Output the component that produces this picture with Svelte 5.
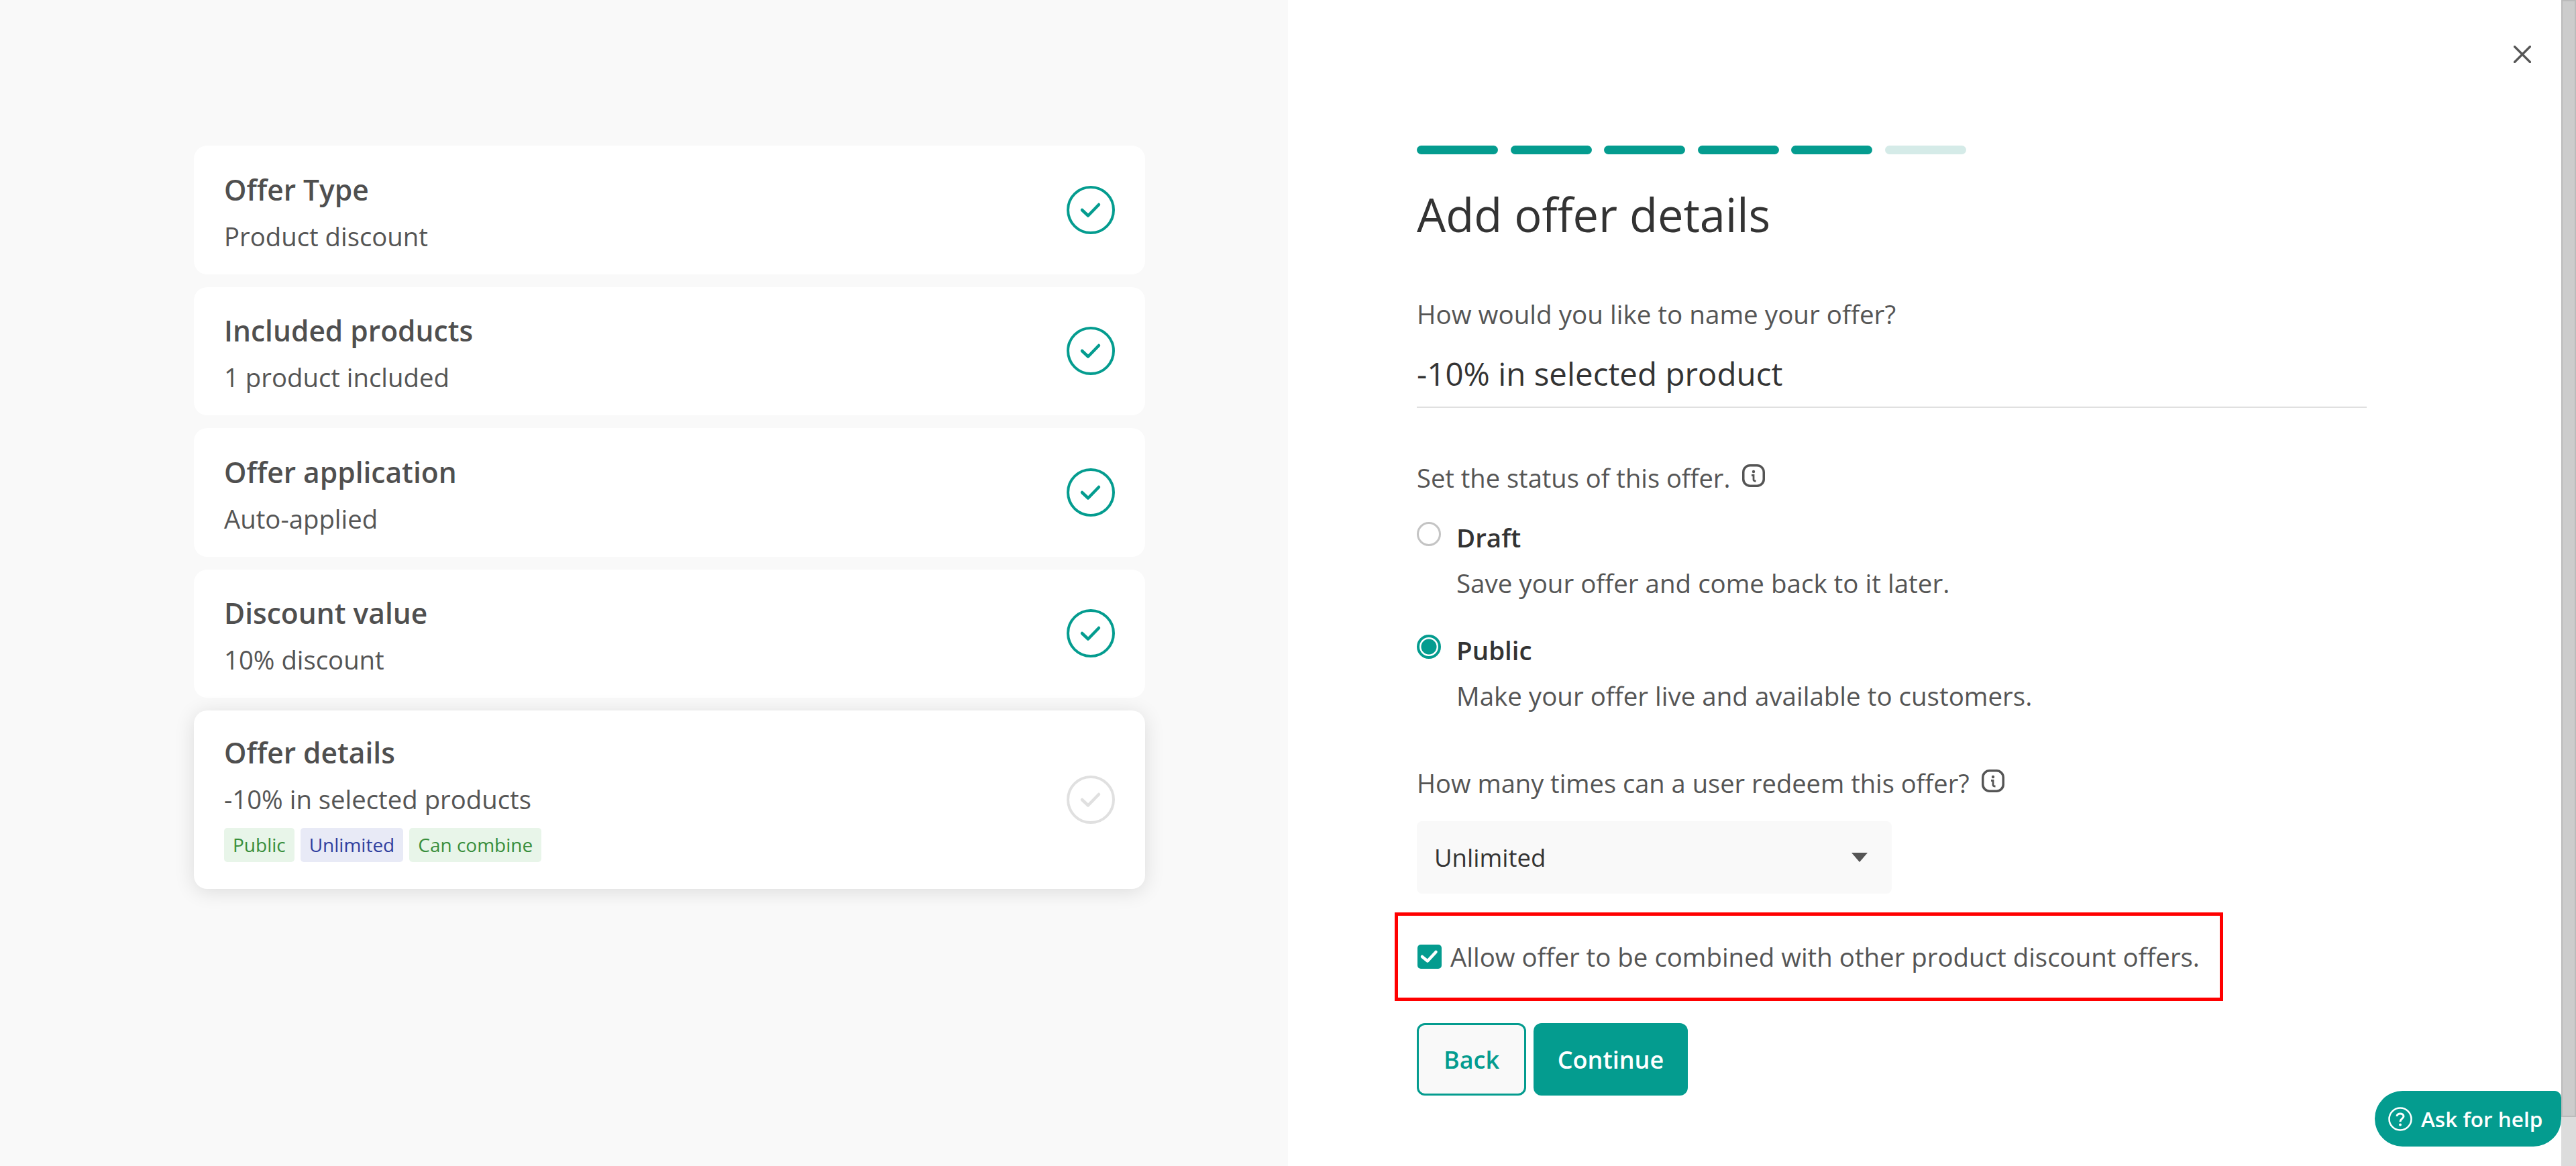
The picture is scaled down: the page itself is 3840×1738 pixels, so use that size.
<script>
  const steps = [
    { title: 'Offer Type', sub: 'Product discount' },
    { title: 'Included products', sub: '1 product included' },
    { title: 'Offer application', sub: 'Auto-applied' },
    { title: 'Discount value', sub: '10% discount' }
  ];
  const tags = [
    { label: 'Public', kind: 'green' },
    { label: 'Unlimited', kind: 'blue' },
    { label: 'Can combine', kind: 'green' }
  ];
  const bars = [true, true, true, true, true, false];
</script>

{#snippet check(muted)}
  <svg class="check" class:muted viewBox="0 0 72 72" fill="none">
    <circle cx="36" cy="36" r="34" stroke-width="4" />
    <path d="M23 36 L32 44.500 L48 28" stroke-width="4.500" stroke-linecap="round" stroke-linejoin="round" />
  </svg>
{/snippet}

{#snippet info()}
  <svg class="info" viewBox="0 0 34 34" fill="none">
    <rect x="1.750" y="1.750" width="30.500" height="30.500" rx="10" stroke="#555" stroke-width="3.500" />
    <circle cx="17" cy="11" r="2.200" fill="#555" />
    <path d="M14 16.500 H17 V23 Q17 25 20.500 25" stroke="#555" stroke-width="2.800" />
  </svg>
{/snippet}

<div class="page">
  <aside class="summary">
    {#each steps as step}
      <div class="card">
        <div class="card-body">
          <div class="card-title">{step.title}</div>
          <div class="card-sub">{step.sub}</div>
        </div>
        {@render check(false)}
      </div>
    {/each}
    <div class="card current">
      <div class="card-body">
        <div class="card-title">Offer details</div>
        <div class="card-sub">-10% in selected products</div>
        <div class="tags">
          {#each tags as tag}
            <span class="tag {tag.kind}">{tag.label}</span>
          {/each}
        </div>
      </div>
      {@render check(true)}
    </div>
  </aside>

  <main class="form">
    <div class="bars">
      {#each bars as on}
        <span class="bar" class:on></span>
      {/each}
    </div>
    <h1>Add offer details</h1>

    <div class="label first">How would you like to name your offer?</div>
    <div class="name-input">-10% in selected product</div>

    <div class="label status">Set the status of this offer. {@render info()}</div>
    <div class="radio draft">
      <span class="dot"></span>
      <div>
        <div class="radio-title">Draft</div>
        <div class="radio-text">Save your offer and come back to it later.</div>
      </div>
    </div>
    <div class="radio public">
      <span class="dot on"></span>
      <div>
        <div class="radio-title">Public</div>
        <div class="radio-text">Make your offer live and available to customers.</div>
      </div>
    </div>

    <div class="label redeem">How many times can a user redeem this offer? {@render info()}</div>
    <div class="select">
      <span>Unlimited</span>
      <span class="arrow"></span>
    </div>

    <div class="highlight">
      <span class="box">
        <svg viewBox="0 0 36 36" fill="none">
          <path d="M7 18 L15 24.500 L27.500 11" stroke="#fff" stroke-width="4.500" stroke-linecap="round" stroke-linejoin="round" />
        </svg>
      </span>
      <span>Allow offer to be combined with other product discount offers.</span>
    </div>

    <div class="actions">
      <button class="btn back">Back</button>
      <button class="btn next">Continue</button>
    </div>

    <button class="close" aria-label="Close">
      <svg viewBox="0 0 26 26" fill="none">
        <path d="M1.500 1.500 L24.500 24.500 M24.500 1.500 L1.500 24.500" stroke="#555" stroke-width="3.200" stroke-linecap="round" />
      </svg>
    </button>
    <button class="help">
      <svg viewBox="0 0 36 36" fill="none">
        <circle cx="18" cy="18" r="16.500" stroke="#fff" stroke-width="2.500" />
        <path d="M13 14 C13 8.500 23 8.500 23 14 C23 17.500 18 17.500 18 22" stroke="#fff" stroke-width="3" />
        <circle cx="18" cy="26.500" r="2" fill="#fff" />
      </svg>
      Ask for help
    </button>
  </main>

  <div class="scrollbar"><div class="thumb"></div></div>
</div>

<style>
  :global(body) {
    margin: 0;
    background: #fff;
  }

  .page {
    display: flex;
    width: 3840px;
    height: 1738px;
    overflow: hidden;
    font-family: "Open Sans", "Noto Sans", sans-serif;
    color: #555;
  }

  .summary {
    box-sizing: border-box;
    width: 1920px;
    padding: 217px 213px 0 289px;
    background: #f9f9f9;
    display: flex;
    flex-direction: column;
    gap: 19px;
  }

  .card {
    box-sizing: border-box;
    height: 191.5px;
    padding: 0 45px;
    background: #fff;
    border-radius: 20px;
    display: flex;
    align-items: center;
    justify-content: space-between;
  }

  .card.current {
    height: 266px;
    box-shadow: 0 4px 30px rgba(0, 0, 0, 0.12);
  }

  .card-body {
    padding-top: 7px;
  }

  .current .card-body {
    padding: 0 0 6px;
  }

  .card-title {
    font-size: 42.5px;
    line-height: 56px;
    font-weight: 600;
    color: #4f4f4f;
  }

  .card-sub {
    margin-top: 15px;
    font-size: 38.3px;
    line-height: 52px;
  }

  .tags {
    display: flex;
    gap: 9px;
    margin-top: 17px;
  }

  .tag {
    height: 51px;
    padding: 0 13px;
    border-radius: 5px;
    font-size: 28px;
    line-height: 51px;
  }

  .tag.green {
    background: #e8f5e9;
    color: #388e3c;
  }

  .tag.blue {
    background: #e8eaf6;
    color: #303f9f;
  }

  .check {
    width: 72px;
    height: 72px;
    flex: none;
    stroke: #049c8f;
  }

  .check.muted {
    stroke: #e0e0e0;
  }

  .form {
    position: relative;
    flex: 1;
    box-sizing: border-box;
    padding: 217px 290px 0 192px;
  }

  .bars {
    display: flex;
    gap: 18.6px;
  }

  .bar {
    width: 121px;
    height: 13px;
    border-radius: 7px;
    background: #d5ebe8;
  }

  .bar.on {
    background: #049c8f;
  }

  h1 {
    margin: 43px 0 0;
    font-size: 68.6px;
    line-height: 94px;
    font-weight: 400;
    color: #333;
  }

  .label {
    font-size: 38.1px;
    line-height: 52px;
    display: flex;
    align-items: center;
    gap: 18px;
  }

  .label.first {
    margin-top: 75px;
    font-size: 38.6px;
  }

  .name-input {
    margin-top: 32px;
    height: 80px;
    font-size: 47.5px;
    line-height: 62px;
    color: #333;
    border-bottom: 2px solid #e0e0e0;
  }

  .label.status {
    margin-top: 78px;
  }

  .info {
    width: 34px;
    height: 34px;
    flex: none;
    margin-top: -6px;
  }

  .radio {
    display: flex;
    gap: 23px;
  }

  .radio.draft {
    margin-top: 37px;
  }

  .radio.public {
    margin-top: 48px;
  }

  .dot {
    box-sizing: border-box;
    width: 36px;
    height: 36px;
    margin-top: 3px;
    border: 3px solid #c4c4c4;
    border-radius: 50%;
    flex: none;
  }

  .dot.on {
    border: 4px solid #049c8f;
    background: radial-gradient(circle, #049c8f 0 11px, #fff 12px);
  }

  .radio-title {
    font-size: 38.5px;
    line-height: 52px;
    font-weight: 600;
    color: #333;
  }

  .radio-text {
    margin-top: 16px;
    font-size: 38.5px;
    line-height: 52px;
  }

  .label.redeem {
    margin-top: 78px;
  }

  .select {
    box-sizing: border-box;
    width: 708px;
    height: 108px;
    margin-top: 31px;
    padding: 0 36px 0 26px;
    display: flex;
    align-items: center;
    justify-content: space-between;
    font-size: 36.5px;
    color: #333;
    background: #f9f9f9;
    border-radius: 8px;
  }

  .arrow {
    width: 0;
    height: 0;
    border-left: 12px solid transparent;
    border-right: 12px solid transparent;
    border-top: 14px solid #555;
  }

  .highlight {
    box-sizing: border-box;
    width: 1235px;
    height: 132px;
    margin: 28px 0 0 -33px;
    padding-left: 29px;
    display: flex;
    align-items: center;
    gap: 13px;
    font-size: 38.4px;
    border: 5px solid #f00;
  }

  .box {
    width: 36px;
    height: 36px;
    border-radius: 5px;
    background: #049c8f;
    flex: none;
  }

  .box svg {
    display: block;
  }

  .actions {
    display: flex;
    gap: 11px;
    margin-top: 33px;
  }

  .btn {
    box-sizing: border-box;
    height: 108px;
    border-radius: 12px;
    font-family: inherit;
    font-size: 36px;
    font-weight: 600;
  }

  .btn.back {
    width: 163px;
    background: #f9f9f9;
    color: #049c8f;
    border: 3px solid #049c8f;
  }

  .btn.next {
    width: 230px;
    background: #049c8f;
    color: #fff;
    border: 0;
  }

  .close {
    position: absolute;
    top: 68px;
    right: 45px;
    width: 26px;
    height: 26px;
    padding: 0;
    background: none;
    border: 0;
  }

  .close svg {
    display: block;
  }

  .help {
    position: absolute;
    right: 0;
    top: 1626px;
    box-sizing: border-box;
    width: 278px;
    height: 83px;
    padding: 0 0 0 20px;
    display: flex;
    align-items: center;
    gap: 13px;
    font-family: inherit;
    font-size: 31.5px;
    font-weight: 600;
    color: #fff;
    background: #049c8f;
    border: 0;
    border-radius: 42px 10px 42px 42px;
  }

  .help svg {
    width: 36px;
    height: 36px;
  }

  .scrollbar {
    width: 22px;
    flex: none;
    background: #dcdcdc;
  }

  .thumb {
    box-sizing: border-box;
    height: 1665px;
    background: #ccc;
    border: 2px solid #bbb;
  }
</style>
